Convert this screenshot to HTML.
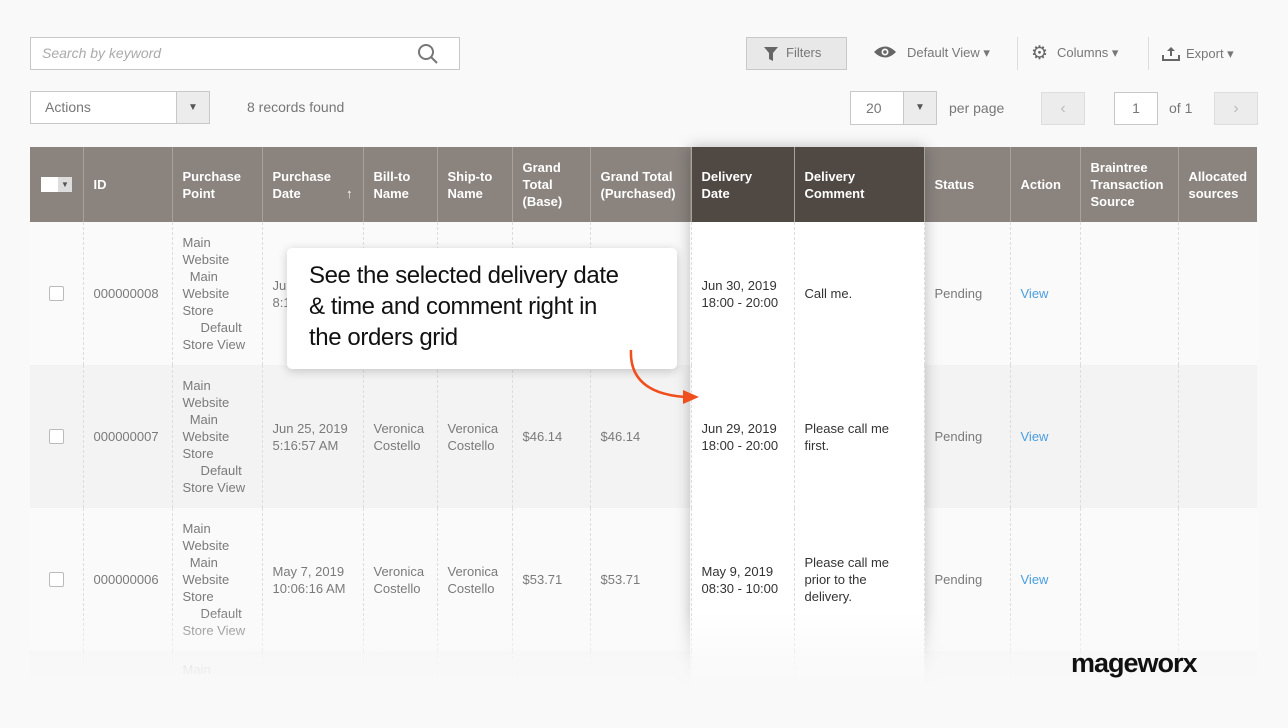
<!DOCTYPE html>
<html><head><meta charset="utf-8"><style>
*{box-sizing:border-box;margin:0;padding:0}
body{width:1288px;height:728px;background:#f9f9f9;font-family:"Liberation Sans",sans-serif;position:relative;overflow:hidden;color:#777}
.abs{position:absolute}
.box{position:absolute;border:1px solid #c8c8c8;background:#fff}
table{position:absolute;left:30px;top:147px;border-collapse:collapse;table-layout:fixed;width:1227px;font-size:13px}
th{background:#8a837e;color:#fff;text-align:left;font-weight:bold;padding:0 10px;height:75px;line-height:17px;border-left:1px solid #a8a29d;vertical-align:middle}
th.d{background:#4f4843}
td{padding:0 10px;vertical-align:middle;line-height:17px;border-left:1px dashed #ddd;height:143px;color:#7a7a7a}
tr.last td{height:50px;vertical-align:top;padding-top:10px}
tr.a td{background:#fafafa}
tr.b td{background:#f3f3f3}
td.d{background:#fff!important;color:#333}
td.v{color:#4a9ee0}
.cb{width:15px;height:15px;border:1px solid #bbb;background:#fff;border-radius:2px;margin-left:9px}
</style></head><body>
<div class="box" style="left:30px;top:37px;width:430px;height:33px"></div>
<div class="abs" style="left:42px;top:45px;font-size:14px;font-style:italic;color:#aaa">Search by keyword</div>
<svg class="abs" style="left:417px;top:43px" width="22" height="22" viewBox="0 0 22 22"><circle cx="9" cy="9" r="7" fill="none" stroke="#777" stroke-width="2"/><line x1="14" y1="14" x2="20" y2="20" stroke="#777" stroke-width="2"/></svg>

<div class="abs" style="left:746px;top:37px;width:101px;height:33px;background:#e8e8e8;border:1px solid #c8c8c8"></div>
<svg class="abs" style="left:764px;top:47px" width="14" height="14" viewBox="0 0 14 14"><path d="M0 0H14L9 6V14L5 12V6Z" fill="#666"/></svg>
<div class="abs" style="left:786px;top:45px;font-size:13px;color:#777">Filters</div>
<svg class="abs" style="left:873px;top:45px" width="24" height="14" viewBox="0 0 24 14"><path d="M1 7Q12 -4 23 7Q12 18 1 7Z" fill="#666"/><circle cx="12" cy="7" r="3.5" fill="#f9f9f9"/><circle cx="12" cy="7" r="1.8" fill="#666"/></svg>
<div class="abs" style="left:907px;top:45px;font-size:13px;color:#777">Default View ▾</div>
<div class="abs" style="left:1017px;top:37px;width:1px;height:33px;background:#ddd"></div>
<div class="abs" style="left:1031px;top:42px;font-size:19px;color:#666">⚙</div>
<div class="abs" style="left:1057px;top:45px;font-size:13px;color:#777">Columns ▾</div>
<div class="abs" style="left:1148px;top:37px;width:1px;height:33px;background:#ddd"></div>
<svg class="abs" style="left:1162px;top:46px" width="18" height="15" viewBox="0 0 18 15"><path d="M1 9V14H17V9" fill="none" stroke="#666" stroke-width="2"/><path d="M9 1L5 5H8V10H10V5H13Z" fill="#666"/></svg>
<div class="abs" style="left:1186px;top:46px;font-size:13px;color:#777">Export ▾</div>

<div class="box" style="left:30px;top:91px;width:180px;height:33px"></div>
<div class="abs" style="left:176px;top:92px;width:33px;height:31px;background:#ececec;border-left:1px solid #c8c8c8;font-size:10px;text-align:center;line-height:31px;color:#555">▼</div>
<div class="abs" style="left:45px;top:99px;font-size:14px;color:#777">Actions</div>
<div class="abs" style="left:247px;top:99px;font-size:14px;color:#777">8 records found</div>
<div class="box" style="left:850px;top:91px;width:87px;height:34px"></div>
<div class="abs" style="left:903px;top:92px;width:33px;height:32px;background:#ececec;border-left:1px solid #c8c8c8;font-size:10px;text-align:center;line-height:32px;color:#555">▼</div>
<div class="abs" style="left:866px;top:100px;font-size:14px;color:#777">20</div>
<div class="abs" style="left:949px;top:100px;font-size:14px;color:#777">per page</div>
<div class="abs" style="left:1041px;top:92px;width:44px;height:33px;background:#ececec;border:1px solid #ddd;color:#bbb;text-align:center;line-height:31px;font-size:16px">‹</div>
<div class="box" style="left:1114px;top:92px;width:44px;height:33px;text-align:center;line-height:31px;font-size:14px;color:#777">1</div>
<div class="abs" style="left:1169px;top:100px;font-size:14px;color:#777">of 1</div>
<div class="abs" style="left:1214px;top:92px;width:44px;height:33px;background:#ececec;border:1px solid #ddd;color:#bbb;text-align:center;line-height:31px;font-size:16px">›</div>

<table>
<colgroup><col style="width:53px"><col style="width:89px"><col style="width:90px"><col style="width:101px"><col style="width:74px"><col style="width:75px"><col style="width:78px"><col style="width:101px"><col style="width:103px"><col style="width:130px"><col style="width:86px"><col style="width:70px"><col style="width:98px"><col style="width:79px"></colgroup>
<tr><th style="border-left:0;padding:0 11px"><div style="width:31px;height:15px;background:#fff;position:relative"><div style="position:absolute;right:0;top:0;width:14px;height:15px;background:#ddd;font-size:8px;color:#555;text-align:center;line-height:15px">▼</div></div></th><th>ID</th><th>Purchase Point</th><th>Purchase Date <span style="float:right;font-weight:normal">↑</span></th><th>Bill-to Name</th><th>Ship-to Name</th><th>Grand Total (Base)</th><th>Grand Total (Purchased)</th><th class="d">Delivery Date</th><th class="d">Delivery Comment</th><th>Status</th><th>Action</th><th>Braintree Transaction Source</th><th>Allocated sources</th></tr>
<tr class="a"><td style="border-left:0"><div class="cb"></div></td><td>000000008</td><td>Main Website<br>&nbsp;&nbsp;Main Website Store<br>&nbsp;&nbsp;&nbsp;&nbsp;&nbsp;Default Store View</td><td>Jun 25, 2019<br>8:14:21 AM</td><td></td><td></td><td></td><td></td><td class="d">Jun 30, 2019<br>18:00 - 20:00</td><td class="d">Call me.</td><td>Pending</td><td class="v">View</td><td></td><td></td></tr>
<tr class="b"><td style="border-left:0"><div class="cb"></div></td><td>000000007</td><td>Main Website<br>&nbsp;&nbsp;Main Website Store<br>&nbsp;&nbsp;&nbsp;&nbsp;&nbsp;Default Store View</td><td>Jun 25, 2019<br>5:16:57 AM</td><td>Veronica Costello</td><td>Veronica Costello</td><td>$46.14</td><td>$46.14</td><td class="d">Jun 29, 2019<br>18:00 - 20:00</td><td class="d">Please call me first.</td><td>Pending</td><td class="v">View</td><td></td><td></td></tr>
<tr class="a"><td style="border-left:0"><div class="cb"></div></td><td>000000006</td><td>Main Website<br>&nbsp;&nbsp;Main Website Store<br>&nbsp;&nbsp;&nbsp;&nbsp;&nbsp;Default Store View</td><td>May 7, 2019<br>10:06:16 AM</td><td>Veronica Costello</td><td>Veronica Costello</td><td>$53.71</td><td>$53.71</td><td class="d">May 9, 2019<br>08:30 - 10:00</td><td class="d">Please call me prior to the delivery.</td><td>Pending</td><td class="v">View</td><td></td><td></td></tr>
<tr class="b last"><td style="border-left:0"></td><td></td><td>Main</td><td></td><td></td><td></td><td></td><td></td><td class="d"></td><td class="d"></td><td></td><td></td><td></td><td></td></tr>
</table>
<div class="abs" style="left:690px;top:147px;width:235px;height:540px;box-shadow:0 0 14px rgba(0,0,0,.25);pointer-events:none"></div>
<div class="abs" style="left:0;top:610px;width:1288px;height:118px;background:linear-gradient(rgba(249,249,249,0),rgba(249,249,249,.85) 45%,#f9f9f9 65%)"></div>

<div class="abs" style="left:287px;top:248px;width:390px;height:121px;background:#fff;border-radius:5px;box-shadow:0 2px 10px rgba(0,0,0,.2)"></div>
<div class="abs" style="left:309px;top:260px;width:370px;font-size:24px;line-height:31px;color:#111;letter-spacing:-0.4px;white-space:nowrap">See the selected delivery date<br>&amp; time and comment right in<br>the orders grid</div>
<svg class="abs" style="left:625px;top:345px" width="80" height="62" viewBox="0 0 80 62"><path d="M6 5Q4 48 60 52" fill="none" stroke="#f04e1c" stroke-width="2.5"/><path d="M58 45L74 52L58 59Z" fill="#f04e1c"/></svg>
<div class="abs" style="left:1071px;top:648px;font-size:27px;font-weight:bold;color:#111;letter-spacing:-1px">mageworx</div>
</body></html>
